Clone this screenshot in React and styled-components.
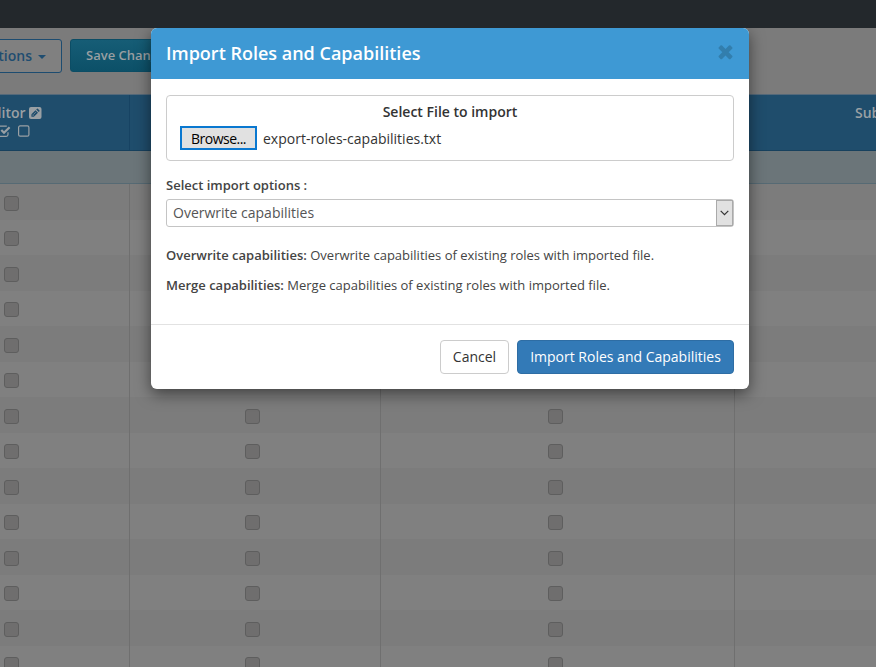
import React from 'react';
import styled, { createGlobalStyle } from 'styled-components';

const GlobalStyle = createGlobalStyle`
  *, *::before, *::after { box-sizing: border-box; }
  body { margin: 0; overflow: hidden; font-family: 'Open Sans', 'Noto Sans', sans-serif; }
`;

const Page = styled.div`
  position: relative;
  width: 876px;
  height: 667px;
  overflow: hidden;
  background: #7b7b7b;
`;
const AdminBar = styled.header`
  height: 28px;
  background: #23282c;
`;
const Toolbar = styled.div`
  display: flex;
  gap: 8px;
  height: 66px;
  padding-top: 11px;
`;
const ToolButton = styled.button`
  flex: none;
  display: flex;
  align-items: center;
  height: ${(p) => (p.$primary ? 33 : 34)}px;
  width: ${(p) => (p.$primary ? 140 : 92)}px;
  margin-left: ${(p) => (p.$primary ? 0 : -30)}px;
  padding: 0 15px 2px;
  justify-content: ${(p) => (p.$primary ? 'flex-start' : 'flex-end')};
  gap: 6px;
  border: 1px solid ${(p) => (p.$primary ? '#0c4d65' : '#1d4c70')};
  border-radius: 3px;
  background: ${(p) => (p.$primary ? 'linear-gradient(#165d76, #0c5068)' : '#808080')};
  color: ${(p) => (p.$primary ? '#999fa2' : '#1f4d70')};
  font: 600 ${(p) => (p.$primary ? 13 : 14)}px 'Open Sans', sans-serif;
  white-space: nowrap;
`;
const Caret = styled.span`
  margin-top: 3px;
  border: 4px solid transparent;
  border-top-color: currentColor;
  border-bottom: 0;
`;
const Columns = styled.div`
  display: grid;
  grid-template-columns: 130px 251px 354px 142px;
`;
const HeadRow = styled(Columns)`
  height: 57px;
  background: #1f4d6c;
  border-top: 1px solid #54697a;
  border-bottom: 1px solid #17415e;
  color: #9aa0a4;
  font-size: 14px;
  line-height: 19px;
  font-weight: 600;
`;
const HeadCell = styled.div`
  padding-top: 8px;
  border-right: ${(p) => (p.$last ? 0 : '1px solid #174363')};
  padding-left: ${(p) => (p.$last ? 120 : 0)}px;
  white-space: nowrap;
  overflow: hidden;
`;
const HeadTitle = styled.div`
  display: flex;
  align-items: center;
  gap: 3px;
  margin-left: -15px;
`;
const HeadIcons = styled.div`
  display: flex;
  gap: 7px;
  margin: 3px 0 0 -2px;
`;
const GroupRow = styled.div`
  height: 33px;
  background: #6b7579;
  border-bottom: 1px solid #566a74;
`;
const BodyRow = styled(Columns)`
  height: 35.5px;
  background: ${(p) => (p.$odd ? '#7c7c7c' : '#808080')};
`;
const BodyCell = styled.div`
  padding: 11.8px 0 0 ${(p) => p.$indent}px;
  border-right: ${(p) => (p.$last ? 0 : '1px solid #6f6f6f')};
`;
const Check = styled.div`
  width: 15px;
  height: 15px;
  border: 1px solid #5e5e5e;
  border-radius: 3px;
  background: #6f6e6e;
`;

const Modal = styled.section`
  position: absolute;
  top: 28px;
  left: 151px;
  width: 598px;
  height: 361px;
  border-radius: 6px;
  overflow: hidden;
  background: #fff;
  color: #444;
`;
const ModalShadow = styled.div`
  position: absolute;
  top: 28px;
  left: 0;
  right: 0;
  bottom: 0;
  overflow: hidden;
  &::before {
    content: '';
    position: absolute;
    left: 151px;
    width: 598px;
    height: 361px;
    border-radius: 6px;
    box-shadow: 0 5px 15px rgba(0, 0, 0, 0.5);
  }
`;
const ModalHeader = styled.div`
  display: flex;
  align-items: center;
  justify-content: space-between;
  height: 51px;
  padding: 0 13px 0 15px;
  background: #3e99d4;

  svg { margin-bottom: 4px; }
`;
const Title = styled.h4`
  margin: 0;
  color: #fff;
  font-size: 18px;
  font-weight: 600;
  line-height: 25px;
  white-space: nowrap;
`;
const ModalBody = styled.div`
  height: 245px;
  padding: 16px 15px;
`;
const FileBox = styled.div`
  height: 66px;
  padding: 6px 13px;
  border: 1px solid #ccc;
  border-radius: 4px;
`;
const FileTitle = styled.div`
  text-align: center;
  font-size: 14px;
  line-height: 20px;
  font-weight: 600;
  color: #333;
`;
const FileInput = styled.div`
  display: flex;
  align-items: center;
  gap: 6px;
  margin-top: 4px;
  font-size: 14px;
  color: #333;
`;
const Browse = styled.button`
  width: 77px;
  height: 24px;
  padding: 1px 0 0;
  border: 2px solid #0a78d0;
  background: #e1e1e1;
  color: #000;
  font: 14px/20px 'Open Sans', sans-serif;
  letter-spacing: -0.5px;
`;
const Label = styled.div`
  margin-top: 14px;
  font-size: 13px;
  font-weight: 600;
  line-height: 20px;
`;
const Select = styled.div`
  display: flex;
  align-items: center;
  justify-content: space-between;
  height: 28px;
  margin-top: 4px;
  padding-left: 6px;
  border: 1px solid #c4c4c4;
  border-radius: 3px;
  color: #555;
  font-size: 14px;
`;
const SelectValue = styled.span`
  padding-bottom: 2px;
`;
const SelectArrow = styled.div`
  display: grid;
  place-items: center;
  width: 17px;
  height: 26px;
  border: 1px solid #aaa;
  background: #e1e1e1;
`;
const Notes = styled.div`
  margin-top: 18px;
`;
const Note = styled.p`
  margin: 0 0 10px;
  font-size: 13px;
  line-height: 20px;
  white-space: nowrap;
  b { font-weight: 600; }
`;
const Footer = styled.div`
  display: flex;
  justify-content: flex-end;
  gap: 8px;
  height: 65px;
  padding: 15px;
  border-top: 1px solid #e2e2e2;
`;
const Button = styled.button`
  width: ${(p) => (p.$primary ? 217 : 69)}px;
  height: 34px;
  padding: 0;
  border: 1px solid ${(p) => (p.$primary ? '#2e6da4' : '#ccc')};
  border-radius: 4px;
  background: ${(p) => (p.$primary ? '#337ab7' : '#fff')};
  color: ${(p) => (p.$primary ? '#fff' : '#333')};
  font: 14px/20px 'Open Sans', sans-serif;
  white-space: nowrap;
`;

const CloseIcon = () => (
  <svg width="21" height="21" viewBox="0 0 1792 1792" aria-label="Close">
    <path
      fill="#327ead"
      d="M1490 1322q0 40-28 68l-136 136q-28 28-68 28t-68-28l-294-294-294 294q-28 28-68 28t-68-28l-136-136q-28-28-28-68t28-68l294-294-294-294q-28-28-28-68t28-68l136-136q28-28 68-28t68 28l294 294 294-294q28-28 68-28t68 28l136 136q28 28 28 68t-28 68l-294 294 294 294q28 28 28 68z"
    />
  </svg>
);
const PencilSquare = () => (
  <svg width="13" height="12" viewBox="0 0 13 12">
    <rect width="12.5" height="12" rx="2" fill="#9aa0a4" />
    <path d="M2.4 9.8V7.3L6.5 3.2l2.5 2.5-4.1 4.1zM7.2 2.5l.8-.8q.4-.3.8 0l1.700 1.700q.3.4 0 .8l-.8.8z" fill="#1f4d6c" />
    <path d="M3.200 7.600l1.400 1.400M4.400 7.600l2.500-2.500" stroke="#9aa0a4" strokeWidth=".6" />
  </svg>
);
const CheckedSquare = () => (
  <svg width="13" height="12" viewBox="0 0 13 12" fill="none" stroke="#9aa0a4">
    <path d="M10 7.3v2.2q0 1.8-1.8 1.8H2.3Q.6 11.3.6 9.5V3Q.6 1.2 2.3 1.2h6.5" strokeWidth="1.2" />
    <path d="M3.3 5l2.7 2.8 5.6-5.6" strokeWidth="2.2" />
  </svg>
);
const EmptySquare = () => (
  <svg width="12" height="12" viewBox="0 0 12 12">
    <rect x=".6" y=".9" width="10.3" height="10.3" rx="1.5" fill="none" stroke="#9aa0a4" strokeWidth="1.2" />
  </svg>
);

const rows = Array.from({ length: 14 }, (_, i) => i);

export default function App() {
  return (
    <Page>
      <GlobalStyle />
      <AdminBar />
      <Toolbar>
        <ToolButton>Actions <Caret /></ToolButton>
        <ToolButton $primary>Save Changes</ToolButton>
      </Toolbar>
      <HeadRow>
        <HeadCell>
          <HeadTitle>Editor <PencilSquare /></HeadTitle>
          <HeadIcons><CheckedSquare /><EmptySquare /></HeadIcons>
        </HeadCell>
        <HeadCell />
        <HeadCell />
        <HeadCell $last>Subscriber</HeadCell>
      </HeadRow>
      <GroupRow />
      {rows.map((i) => (
        <BodyRow key={i} $odd={i % 2 === 0}>
          <BodyCell $indent={4}><Check /></BodyCell>
          <BodyCell $indent={115}><Check /></BodyCell>
          <BodyCell $indent={167}><Check /></BodyCell>
          <BodyCell $last />
        </BodyRow>
      ))}
      <ModalShadow />
      <Modal>
        <ModalHeader>
          <Title>Import Roles and Capabilities</Title>
          <CloseIcon />
        </ModalHeader>
        <ModalBody>
          <FileBox>
            <FileTitle>Select File to import</FileTitle>
            <FileInput><Browse>Browse...</Browse><span>export-roles-capabilities.txt</span></FileInput>
          </FileBox>
          <Label>Select import options :</Label>
          <Select>
            <SelectValue>Overwrite capabilities</SelectValue>
            <SelectArrow>
              <svg width="9" height="6" viewBox="0 0 9 6"><path d="M.7.8l3.8 3.8L8.3.8" fill="none" stroke="#333" strokeWidth="1.2" /></svg>
            </SelectArrow>
          </Select>
          <Notes>
            <Note><b>Overwrite capabilities:</b> Overwrite capabilities of existing roles with imported file.</Note>
            <Note><b>Merge capabilities:</b> Merge capabilities of existing roles with imported file.</Note>
          </Notes>
        </ModalBody>
        <Footer>
          <Button>Cancel</Button>
          <Button $primary>Import Roles and Capabilities</Button>
        </Footer>
      </Modal>
    </Page>
  );
}
